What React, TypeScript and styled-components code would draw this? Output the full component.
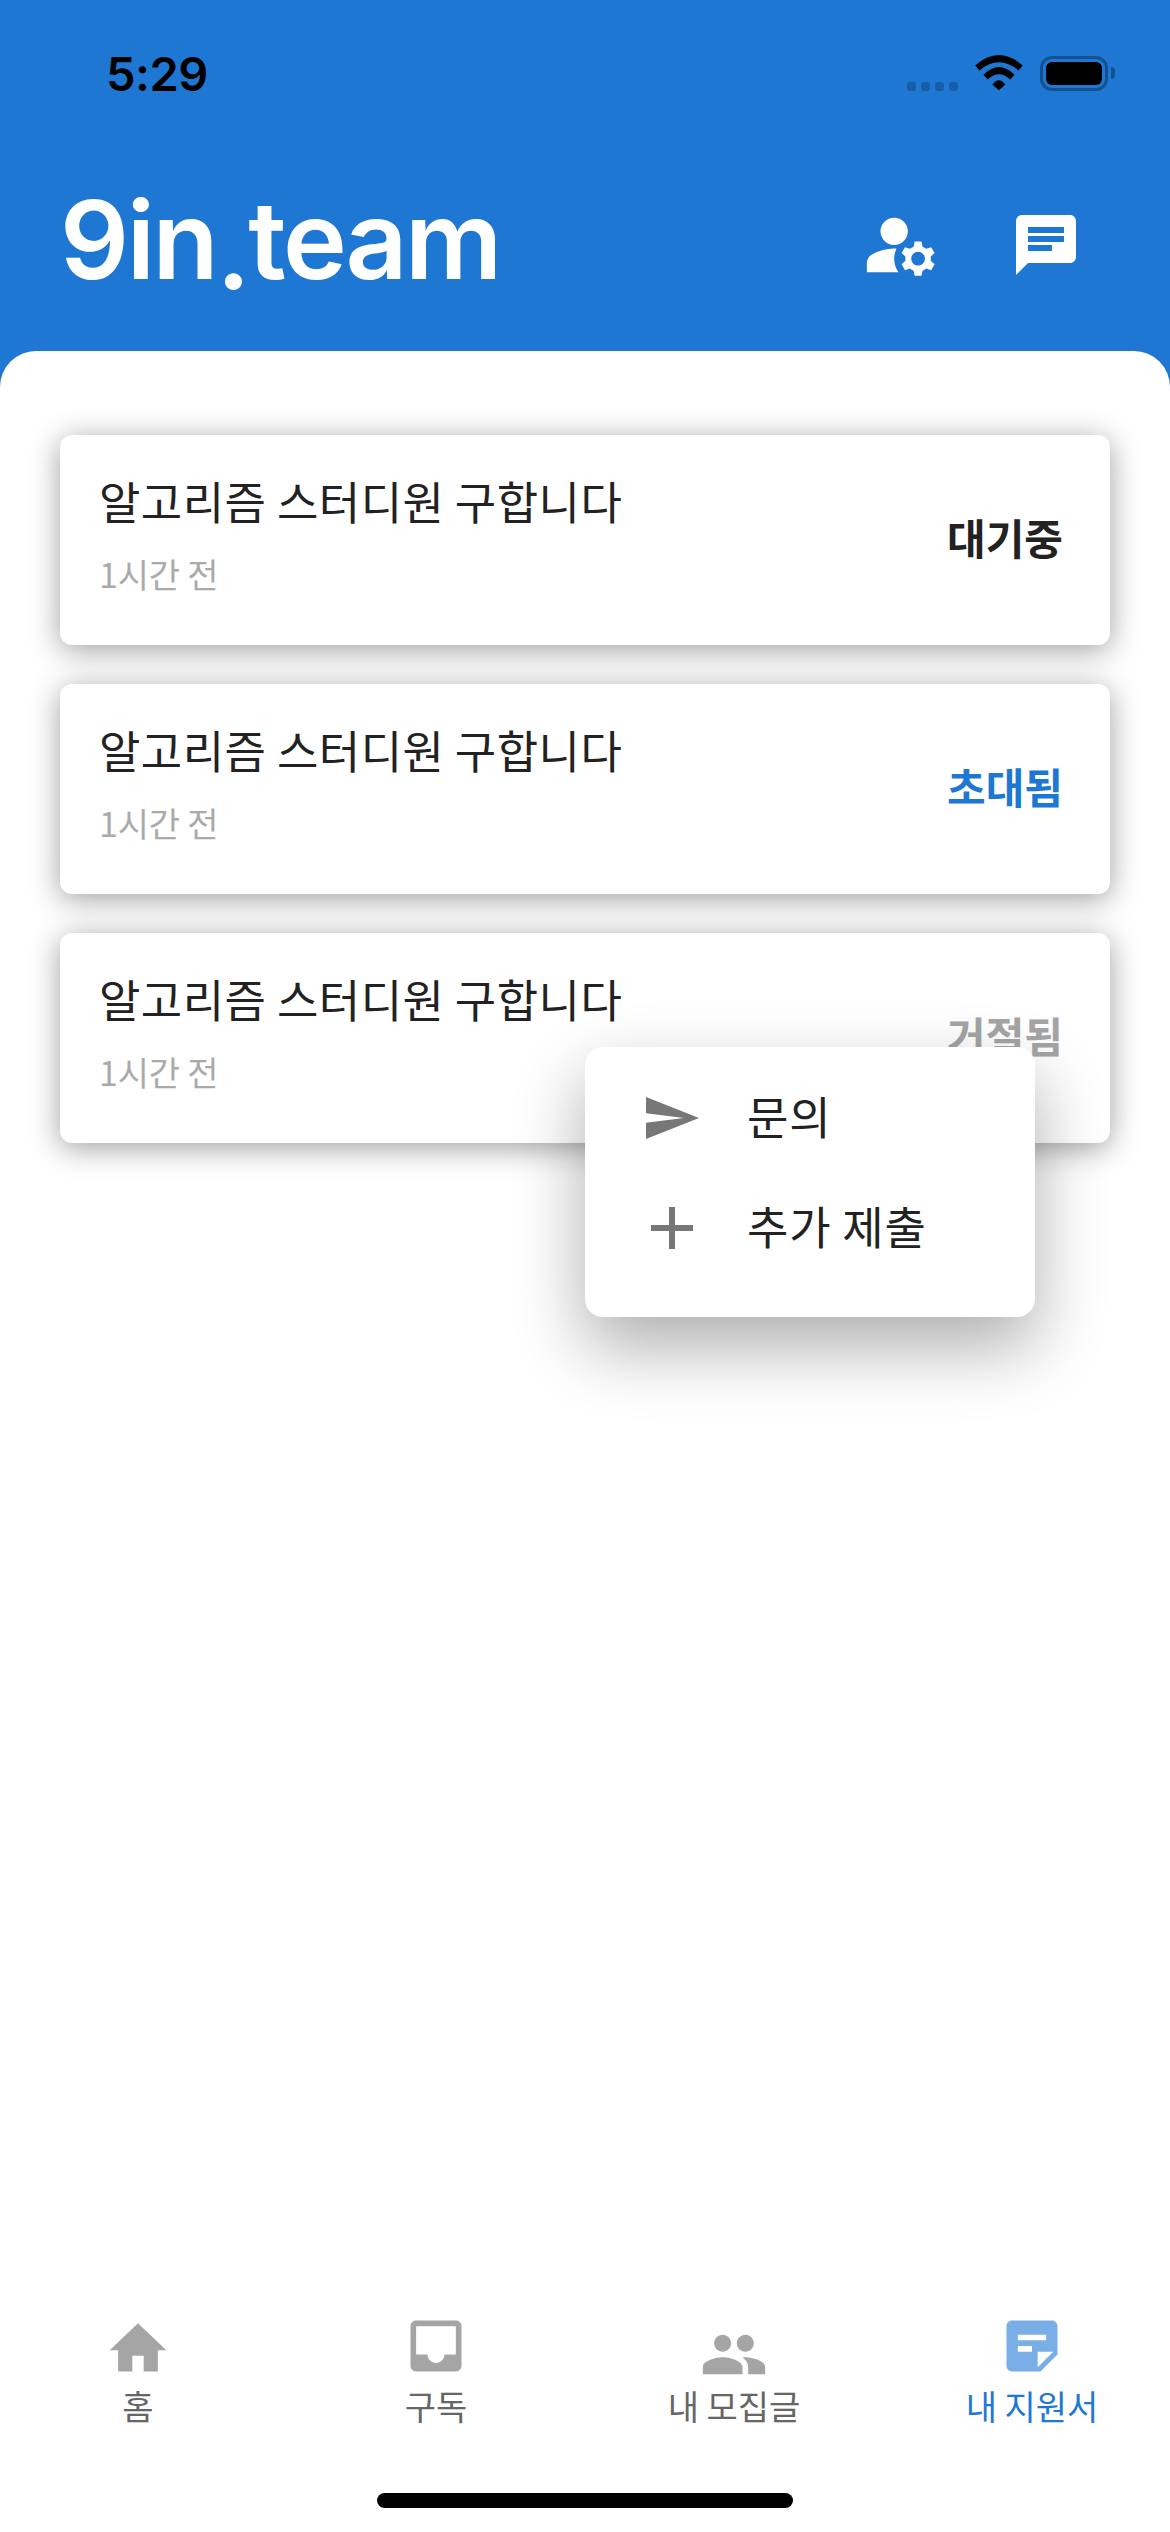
import React from "react";
import styled, { createGlobalStyle } from "styled-components";

const BLUE = "#1e77d3";

const GlobalStyle = createGlobalStyle`
  html, body {
    margin: 0;
    padding: 0;
    overflow: hidden;
  }
  body {
    font-family: "Noto Sans CJK KR", "Noto Sans", sans-serif;
  }
`;

const Screen = styled.div`
  width: 1170px;
  height: 2532px;
  display: flex;
  flex-direction: column;
  background: ${BLUE};
  overflow: hidden;
`;

const StatusBar = styled.div`
  height: 36px;
  padding: 55px 62px 0 106px;
  display: flex;
  align-items: flex-end;
  justify-content: space-between;
`;

const Clock = styled.span`
  font-family: "Inter", "Liberation Sans", sans-serif;
  font-weight: 600;
  font-size: 47px;
  line-height: 34px;
  letter-spacing: -0.5px;
  color: #000;
`;

const StatusIcons = styled.div`
  display: flex;
  align-items: flex-end;
`;

const CellDots = styled.div`
  display: flex;
  gap: 5px;
  margin-right: 17px;
`;

const CellDot = styled.i`
  width: 9px;
  height: 9px;
  border-radius: 3px;
  background: #175ea9;
`;

const Battery = styled.div`
  width: 68px;
  height: 35px;
  margin-left: 17px;
  padding: 3px;
  box-sizing: border-box;
  border: 3px solid #14528f;
  border-radius: 12px;
  position: relative;

  &::before {
    content: "";
    display: block;
    height: 100%;
    border-radius: 6px;
    background: #000;
  }

  &::after {
    content: "";
    position: absolute;
    right: -10px;
    top: 8px;
    width: 4px;
    height: 12px;
    border-radius: 0 6px 6px 0;
    background: #14528f;
  }
`;

const Header = styled.header`
  height: 92px;
  margin: 108px 0 60px;
  padding: 0 88px 0 60px;
  display: flex;
  align-items: center;
  justify-content: space-between;
`;

const Logo = styled.div`
  font-family: "Inter", "Noto Sans", sans-serif;
  font-weight: 600;
  font-size: 108px;
  line-height: 92px;
  letter-spacing: -2.4px;
  color: #fff;
`;

const LogoDot = styled.span`
  vertical-align: -10px;
`;

const HeaderActions = styled.div`
  display: flex;
  align-items: center;
  gap: 68px;
  color: #fff;
`;

const Sheet = styled.main`
  flex: 1;
  position: relative;
  display: flex;
  flex-direction: column;
  gap: 39px;
  padding: 84px 60px 0;
  background: #fff;
  border-radius: 36px 36px 0 0;
`;

const Card = styled.article`
  height: 210px;
  padding: 0 47px 0 39px;
  display: flex;
  align-items: center;
  justify-content: space-between;
  background: #fff;
  border-radius: 12px;
  box-shadow: 0 5px 30px rgba(0, 0, 0, 0.38);
`;

const CardText = styled.div`
  display: flex;
  flex-direction: column;
  gap: 27px;
  margin-top: -11px;
`;

const CardTitle = styled.div`
  font-size: 45px;
  line-height: 52px;
  letter-spacing: 0.45px;
  color: #222;
`;

const CardTime = styled.div`
  font-size: 34px;
  line-height: 40px;
  letter-spacing: -0.2px;
  color: #aaa;
`;

const CardState = styled.div<{ $color: string }>`
  margin-top: -6px;
  font-size: 42px;
  font-weight: 700;
  line-height: 52px;
  color: ${(p) => p.$color};
`;

const Menu = styled.div`
  position: absolute;
  top: 696px;
  right: 135px;
  width: 450px;
  height: 270px;
  box-sizing: border-box;
  padding: 16px 0 34px 51px;
  background: #fff;
  border-radius: 18px;
  box-shadow: 0 30px 70px rgba(0, 0, 0, 0.32);
`;

const MenuItem = styled.div`
  height: 110px;
  display: flex;
  align-items: center;
  gap: 39px;
  font-size: 45px;
  letter-spacing: 0.8px;
  color: #222;
`;

const MenuLabel = styled.span`
  margin-top: -6px;
`;

const MenuIcon = styled.div`
  width: 72px;
  height: 72px;
  display: flex;
  align-items: center;
  justify-content: center;
  color: #777;
`;

const TabBar = styled.nav`
  display: grid;
  grid-template-columns: repeat(4, 298px);
  justify-content: center;
  background: #fff;
`;

const Tab = styled.div<{ $active?: boolean }>`
  display: flex;
  flex-direction: column;
  align-items: center;
  gap: 6px;
  font-size: 34px;
  line-height: 40px;
  color: ${(p) => (p.$active ? BLUE : "#666")};

  svg {
    color: ${(p) => (p.$active ? "#7aaee7" : "#a5a5a5")};
  }
`;

const HomeArea = styled.div`
  height: 106px;
  display: flex;
  align-items: flex-end;
  justify-content: center;
  padding-bottom: 24px;
  box-sizing: border-box;
  background: #fff;
`;

const HomeIndicator = styled.div`
  width: 416px;
  height: 15px;
  border-radius: 8px;
  background: #000;
`;

function Icon({ d, size = 68, viewBox = "0 0 24 24" }: { d: string; size?: number; viewBox?: string }) {
  return (
    <svg width={size} height={size} viewBox={viewBox} fill="currentColor">
      <path d={d} />
    </svg>
  );
}

function WifiIcon() {
  return (
    <svg width="48" height="36" viewBox="0 0 145 110" fill="#000">
      <path d="M0 32Q72-32 145 32L132 47Q72-2 13 47Z" />
      <path d="M25 60Q72 14 120 60L107 75Q72 42 38 75Z" />
      <path d="M52 90Q72 64 92 90L72 108Z" />
    </svg>
  );
}

function ManageAccountsIcon() {
  return (
    <svg width="82" height="82" viewBox="0 0 24 24" fill="currentColor">
      <circle cx="10" cy="8" r="4" />
      <path d="M10.67 13.02c-.22-.01-.44-.02-.67-.02-2.42 0-4.68.67-6.61 1.82-.88.52-1.39 1.5-1.39 2.53V20h9.26c-.79-1.13-1.26-2.51-1.26-4 0-1.07.25-2.07.67-2.98z" />
      <path d="M20.75 16c0-.22-.03-.42-.06-.63l1.14-1.01-1-1.73-1.45.49c-.32-.27-.68-.48-1.08-.63L18 11h-2l-.3 1.49c-.4.15-.76.36-1.08.63l-1.45-.49-1 1.73 1.14 1.01c-.03.21-.06.41-.06.63s.03.42.06.63l-1.14 1.01 1 1.73 1.45-.49c.32.27.68.48 1.08.63L16 21h2l.3-1.49c.4-.15.76-.36 1.08-.63l1.45.49 1-1.73-1.14-1.01c.03-.21.06-.41.06-.63zM17 18c-1.1 0-2-.9-2-2s.9-2 2-2 2 .9 2 2-.9 2-2 2z" />
    </svg>
  );
}

function SendIcon() {
  return (
    <svg width="53" height="42" viewBox="2 3 21 18" preserveAspectRatio="none" fill="currentColor">
      <path d="M2.01 21L23 12 2.01 3 2 10l15 2-15 2z" />
    </svg>
  );
}

const cards = [
  { state: "대기중", color: "#222" },
  { state: "초대됨", color: BLUE },
  { state: "거절됨", color: "#a5a5a5" },
];

const tabs = [
  { label: "홈", d: "M10 21v-5.6h4V21h5v-7.5h3L12 4 2 13.5h3V21z" },
  {
    label: "구독",
    d: "M19 3H4.99c-1.11 0-1.98.89-1.98 2L3 19c0 1.1.88 2 1.99 2H19c1.1 0 2-.9 2-2V5c0-1.11-.9-2-2-2zm0 12h-4c0 1.66-1.35 3-3 3s-3-1.34-3-3H4.99V5H19v10z",
  },
  {
    label: "내 모집글",
    viewBox: "0 -3 24 24",
    d: "M16 11c1.66 0 2.99-1.34 2.99-3S17.66 5 16 5c-1.66 0-3 1.34-3 3s1.34 3 3 3zm-8 0c1.66 0 2.99-1.34 2.99-3S9.66 5 8 5C6.34 5 5 6.34 5 8s1.34 3 3 3zm0 2c-2.33 0-7 1.17-7 3.5V19h14v-2.5c0-2.33-4.67-3.5-7-3.5zm8 0c-.29 0-.62.02-.97.05 1.16.84 1.97 1.97 1.97 3.45V19h6v-2.5c0-2.33-4.67-3.5-7-3.5z",
  },
  {
    label: "내 지원서",
    active: true,
    d: "M19 3H4.99C3.89 3 3 3.9 3 5l.01 14c0 1.1.89 2 1.99 2h10l6-6V5c0-1.1-.9-2-2-2zM7 8h10v2H7V8zm5 6H7v-2h5v2zm2 5.5V14h5.5L14 19.5z",
  },
];

function App() {
  return (
    <Screen>
      <GlobalStyle />
      <StatusBar>
        <Clock>5:29</Clock>
        <StatusIcons>
          <CellDots>
            <CellDot />
            <CellDot />
            <CellDot />
            <CellDot />
          </CellDots>
          <WifiIcon />
          <Battery />
        </StatusIcons>
      </StatusBar>

      <Header>
        <Logo>
          9in<LogoDot>.</LogoDot>team
        </Logo>
        <HeaderActions>
          <ManageAccountsIcon />
          <Icon
            size={72}
            d="M20 2H4c-1.1 0-1.99.9-1.99 2L2 22l4-4h14c1.1 0 2-.9 2-2V4c0-1.1-.9-2-2-2zM6 9h12v2H6V9zm8 5H6v-2h8v2zm4-6H6V6h12v2z"
          />
        </HeaderActions>
      </Header>

      <Sheet>
        {cards.map((card) => (
          <Card key={card.state}>
            <CardText>
              <CardTitle>알고리즘 스터디원 구합니다</CardTitle>
              <CardTime>1시간 전</CardTime>
            </CardText>
            <CardState $color={card.color}>{card.state}</CardState>
          </Card>
        ))}
        <Menu>
          <MenuItem>
            <MenuIcon>
              <SendIcon />
            </MenuIcon>
            <MenuLabel>문의</MenuLabel>
          </MenuItem>
          <MenuItem>
            <MenuIcon>
              <Icon size={72} d="M19 13h-6v6h-2v-6H5v-2h6V5h2v6h6v2z" />
            </MenuIcon>
            <MenuLabel>추가 제출</MenuLabel>
          </MenuItem>
        </Menu>
      </Sheet>

      <TabBar>
        {tabs.map((tab) => (
          <Tab key={tab.label} $active={tab.active}>
            <Icon d={tab.d} viewBox={tab.viewBox} />
            {tab.label}
          </Tab>
        ))}
      </TabBar>
      <HomeArea>
        <HomeIndicator />
      </HomeArea>
    </Screen>
  );
}

export default App;
